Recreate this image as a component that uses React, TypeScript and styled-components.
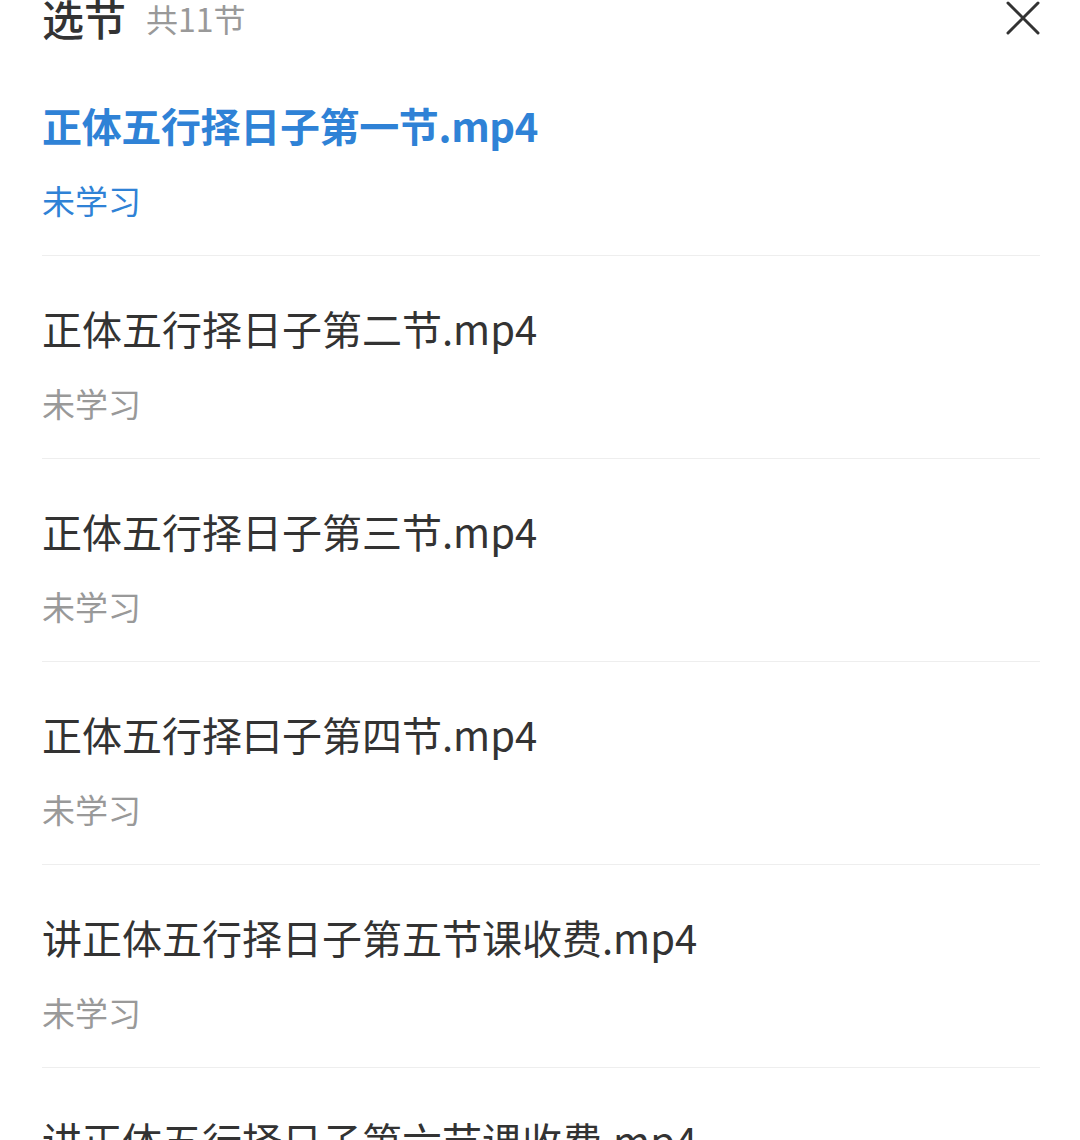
import styled, { createGlobalStyle } from 'styled-components'

const GlobalStyle = createGlobalStyle`
  html, body {
    margin: 0;
    padding: 0;
    background: #ffffff;
  }
  body {
    font-family: "Noto Sans CJK SC", "Noto Sans", sans-serif;
    -webkit-font-smoothing: antialiased;
  }
`

type Lesson = {
    title: string;
    status: string;
}

const lessons: Lesson[] = [
    { title: '正体五行择日子第一节.mp4', status: '未学习' },
    { title: '正体五行择日子第二节.mp4', status: '未学习' },
    { title: '正体五行择日子第三节.mp4', status: '未学习' },
    { title: '正体五行择曰子第四节.mp4', status: '未学习' },
    { title: '讲正体五行择日子第五节课收费.mp4', status: '未学习' },
    { title: '讲正体五行择日子第六节课收费.mp4', status: '未学习' },
]

const Sheet = styled.div`
    padding: 0 40px 0 42px;
    background: #ffffff;
`

const Header = styled.header`
    display: flex;
    align-items: center;
    height: 36px;
    margin-bottom: 17px;
`

const Heading = styled.h2`
    margin: 0;
    font-size: 42px;
    line-height: 36px;
    font-weight: 500;
    color: #333333;
`

const Count = styled.span`
    margin-left: 20px;
    font-size: 32px;
    line-height: 36px;
    color: #999999;
`

const CloseButton = styled.button`
    margin-left: auto;
    margin-right: -1px;
    padding: 0;
    width: 36px;
    height: 36px;
    border: none;
    background: none;
    display: flex;
    align-items: center;
    justify-content: center;
    cursor: pointer;
`

const List = styled.ul`
    list-style: none;
    margin: 0;
    padding: 0;
`

const Item = styled.li`
    padding: 48px 0 35px;
    border-bottom: 1px solid #eeeeee;
`

const Title = styled.div<{ $active: boolean }>`
    font-size: 40px;
    line-height: 48px;
    white-space: nowrap;
    font-weight: ${({ $active }) => ($active ? 700 : 400)};
    letter-spacing: ${({ $active }) => ($active ? '-0.35px' : '0')};
    color: ${({ $active }) => ($active ? '#2f82d6' : '#333333')};
`

const Status = styled.div<{ $active: boolean }>`
    margin-top: 31px;
    font-size: 33px;
    line-height: 40px;
    color: ${({ $active }) => ($active ? '#2f82d6' : '#999999')};
`

export default function App() {
    const current = 0

    return (
        <>
            <GlobalStyle />
            <Sheet>
                <Header>
                    <Heading>选节</Heading>
                    <Count>共11节</Count>
                    <CloseButton aria-label="关闭">
                        <svg width="34" height="34" viewBox="0 0 34 34">
                            <path d="M2 2 L32 32 M32 2 L2 32" stroke="#333333" strokeWidth="3" strokeLinecap="round" fill="none" />
                        </svg>
                    </CloseButton>
                </Header>
                <List>
                    {lessons.map((lesson, index) => (
                        <Item key={index}>
                            <Title $active={index === current}>{lesson.title}</Title>
                            <Status $active={index === current}>{lesson.status}</Status>
                        </Item>
                    ))}
                </List>
            </Sheet>
        </>
    )
}
